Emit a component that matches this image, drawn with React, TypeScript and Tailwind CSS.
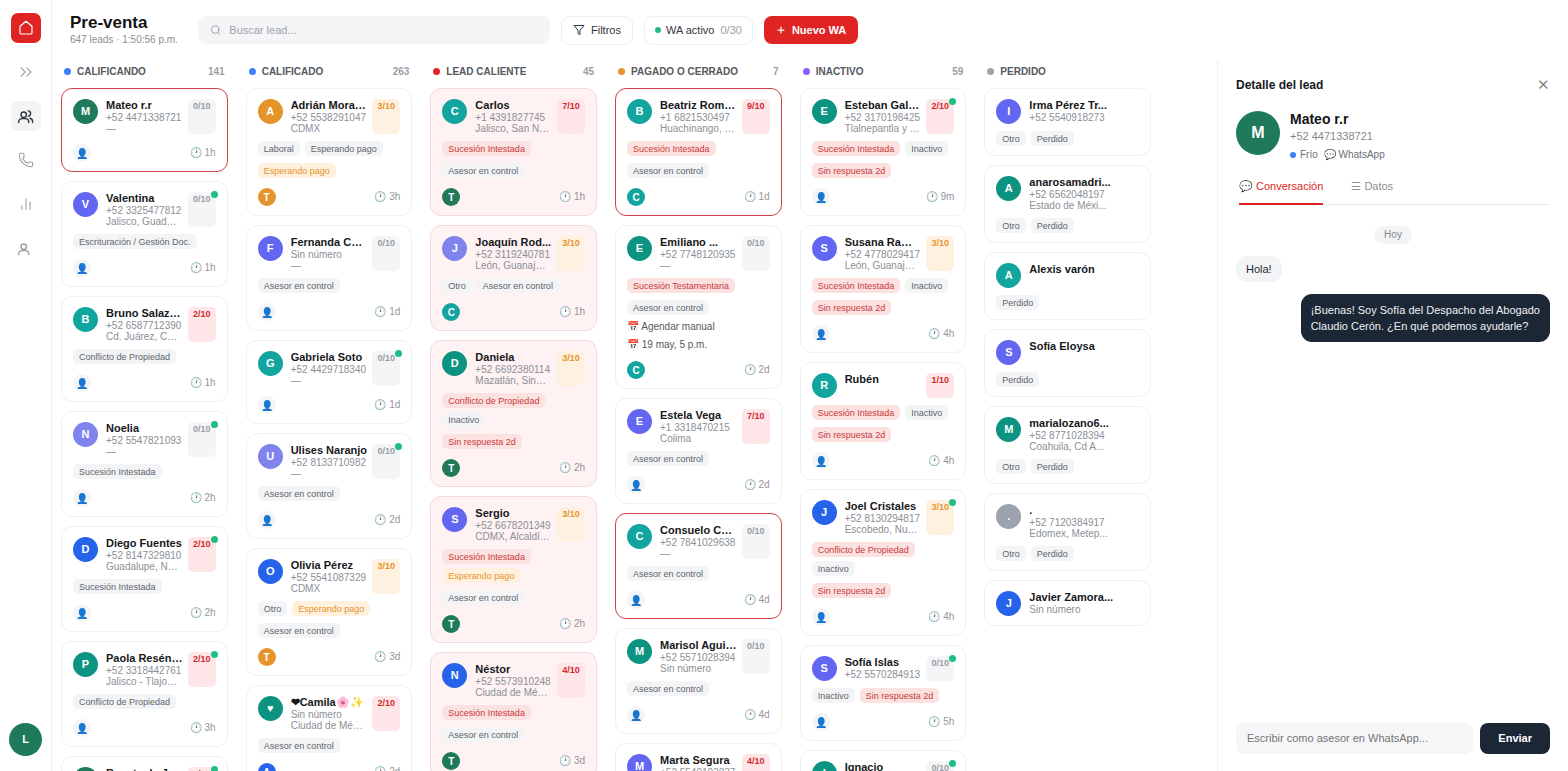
import type { ReactNode } from 'react';
import { ChartNoAxesColumn, ChevronsRight, Phone, Plus, Search } from 'lucide-react';

type Tone = 'gray' | 'red' | 'amber';

type Lead = {
  name: string;
  initial: string;
  color: string;
  lines?: string[];
  score?: number;
  tone?: Tone;
  online?: boolean;
  outlined?: boolean;
  tags?: [string, Tone][];
  status?: [string, Tone];
  agenda?: string[];
  owner?: [string, string];
  age?: string;
};

const GREEN = 'bg-[#1f7a5a]';
const TEAL = 'bg-[#12a5a0]';
const PINE = 'bg-[#0d9382]';
const INDIGO = 'bg-[#6366f1]';
const LILAC = 'bg-[#7f83ec]';
const BLUE = 'bg-[#2563eb]';
const ORANGE = 'bg-[#e5942b]';
const SLATE = 'bg-[#9ca3af]';

const CONTROL: [string, Tone] = ['Asesor en control', 'gray'];
const NO_REPLY: [string, Tone] = ['Sin respuesta 2d', 'red'];

const COLUMNS: { title: string; count?: number; dot: string; hot?: boolean; leads: Lead[] }[] = [
  {
    title: 'CALIFICANDO',
    count: 141,
    dot: 'bg-[#3b82f6]',
    leads: [
      { name: 'Mateo r.r', initial: 'M', color: GREEN, lines: ['+52 4471338721', '—'], score: 0, outlined: true, age: '1h' },
      { name: 'Valentina', initial: 'V', color: INDIGO, lines: ['+52 3325477812', 'Jalisco, Guad…'], score: 0, online: true, tags: [['Escrituración / Gestión Doc.', 'gray']], age: '1h' },
      { name: 'Bruno Salaz…', initial: 'B', color: TEAL, lines: ['+52 6587712390', 'Cd. Juárez, C…'], score: 2, tone: 'red', tags: [['Conflicto de Propiedad', 'gray']], age: '1h' },
      { name: 'Noelia', initial: 'N', color: LILAC, lines: ['+52 5547821093', '—'], score: 0, online: true, tags: [['Sucesión Intestada', 'gray']], age: '2h' },
      { name: 'Diego Fuentes', initial: 'D', color: BLUE, lines: ['+52 8147329810', 'Guadalupe, N…'], score: 2, tone: 'red', online: true, tags: [['Sucesión Intestada', 'gray']], age: '2h' },
      { name: 'Paola Resén…', initial: 'P', color: PINE, lines: ['+52 3318442761', 'Jalisco - Tlajo…'], score: 2, tone: 'red', online: true, tags: [['Conflicto de Propiedad', 'gray']], age: '3h' },
      { name: 'Renata de J…', initial: 'R', color: GREEN, lines: ['+52 5512093847', 'CDMX'], score: 2, tone: 'red', online: true, age: '3h' },
    ],
  },
  {
    title: 'CALIFICADO',
    count: 263,
    dot: 'bg-[#3b82f6]',
    leads: [
      { name: 'Adrián Mora…', initial: 'A', color: ORANGE, lines: ['+52 5538291047', 'CDMX'], score: 3, tone: 'amber', tags: [['Laboral', 'gray'], ['Esperando pago', 'gray']], status: ['Esperando pago', 'amber'], owner: ['T', ORANGE], age: '3h' },
      { name: 'Fernanda C…', initial: 'F', color: INDIGO, lines: ['Sin número', '—'], score: 0, status: CONTROL, age: '1d' },
      { name: 'Gabriela Soto', initial: 'G', color: TEAL, lines: ['+52 4429718340', '—'], score: 0, online: true, age: '1d' },
      { name: 'Ulises Naranjo', initial: 'U', color: LILAC, lines: ['+52 8133710982', '—'], score: 0, online: true, status: CONTROL, age: '2d' },
      { name: 'Olivia Pérez', initial: 'O', color: BLUE, lines: ['+52 5541087329', 'CDMX'], score: 3, tone: 'amber', tags: [['Otro', 'gray'], ['Esperando pago', 'amber']], status: CONTROL, owner: ['T', ORANGE], age: '3d' },
      { name: '❤Camila🌸✨', initial: '♥', color: PINE, lines: ['Sin número', 'Ciudad de Mé…'], score: 2, tone: 'red', status: CONTROL, owner: ['A', BLUE], age: '2d' },
    ],
  },
  {
    title: 'LEAD CALIENTE',
    count: 45,
    dot: 'bg-[#e02424]',
    hot: true,
    leads: [
      { name: 'Carlos', initial: 'C', color: TEAL, lines: ['+1 4391827745', 'Jalisco, San N…'], score: 7, tone: 'red', tags: [['Sucesión Intestada', 'red']], status: CONTROL, owner: ['T', GREEN], age: '1h' },
      { name: 'Joaquín Rod...', initial: 'J', color: LILAC, lines: ['+52 3119240781', 'León, Guanaj…'], score: 3, tone: 'amber', tags: [['Otro', 'gray'], CONTROL], owner: ['C', TEAL], age: '1h' },
      { name: 'Daniela', initial: 'D', color: PINE, lines: ['+52 6692380114', 'Mazatlán, Sin…'], score: 3, tone: 'amber', tags: [['Conflicto de Propiedad', 'red'], ['Inactivo', 'gray']], status: NO_REPLY, owner: ['T', GREEN], age: '2h' },
      { name: 'Sergio', initial: 'S', color: INDIGO, lines: ['+52 6678201349', 'CDMX, Alcaldí…'], score: 3, tone: 'amber', tags: [['Sucesión Intestada', 'red'], ['Esperando pago', 'amber']], status: CONTROL, owner: ['T', GREEN], age: '2h' },
      { name: 'Néstor', initial: 'N', color: BLUE, lines: ['+52 5573910248', 'Ciudad de Mé…'], score: 4, tone: 'red', tags: [['Sucesión Intestada', 'red']], status: CONTROL, owner: ['T', GREEN], age: '3d' },
    ],
  },
  {
    title: 'PAGADO O CERRADO',
    count: 7,
    dot: 'bg-[#e5942b]',
    leads: [
      { name: 'Beatriz Rom…', initial: 'B', color: TEAL, lines: ['+1 6821530497', 'Huachinango, …'], score: 9, tone: 'red', outlined: true, tags: [['Sucesión Intestada', 'red']], status: CONTROL, owner: ['C', TEAL], age: '1d' },
      { name: 'Emiliano ...', initial: 'E', color: PINE, lines: ['+52 7748120935', '—'], score: 0, tags: [['Sucesión Testamentaria', 'red']], status: CONTROL, agenda: ['Agendar manual', '19 may, 5 p.m.'], owner: ['C', TEAL], age: '2d' },
      { name: 'Estela Vega', initial: 'E', color: INDIGO, lines: ['+1 3318470215', 'Colima'], score: 7, tone: 'red', status: CONTROL, age: '2d' },
      { name: 'Consuelo C…', initial: 'C', color: TEAL, lines: ['+52 7841029638', '—'], score: 0, outlined: true, status: CONTROL, age: '4d' },
      { name: 'Marisol Agui…', initial: 'M', color: PINE, lines: ['+52 5571028394', 'Sin número'], score: 0, status: CONTROL, age: '4d' },
      { name: 'Marta Segura', initial: 'M', color: INDIGO, lines: ['+52 5540192837', '—'], score: 4, tone: 'red', status: CONTROL, age: '5d' },
    ],
  },
  {
    title: 'INACTIVO',
    count: 59,
    dot: 'bg-[#8b5cf6]',
    leads: [
      { name: 'Esteban Gal…', initial: 'E', color: PINE, lines: ['+52 3170198425', 'Tlalnepantla y …'], score: 2, tone: 'red', online: true, tags: [['Sucesión Intestada', 'red'], ['Inactivo', 'gray']], status: NO_REPLY, age: '9m' },
      { name: 'Susana Ra…', initial: 'S', color: INDIGO, lines: ['+52 4778029417', 'León, Guanaj…'], score: 3, tone: 'amber', tags: [['Sucesión Intestada', 'red'], ['Inactivo', 'gray']], status: NO_REPLY, age: '4h' },
      { name: 'Rubén', initial: 'R', color: TEAL, score: 1, tone: 'red', tags: [['Sucesión Intestada', 'red'], ['Inactivo', 'gray']], status: NO_REPLY, age: '4h' },
      { name: 'Joel Cristales', initial: 'J', color: BLUE, lines: ['+52 8130294817', 'Escobedo, Nu…'], score: 3, tone: 'amber', online: true, tags: [['Conflicto de Propiedad', 'red'], ['Inactivo', 'gray']], status: NO_REPLY, age: '4h' },
      { name: 'Sofía Islas', initial: 'S', color: INDIGO, lines: ['+52 5570284913'], score: 0, online: true, tags: [['Inactivo', 'gray'], NO_REPLY], age: '5h' },
      { name: 'Ignacio', initial: 'I', color: PINE, lines: ['+52 5598120374'], score: 0, online: true, age: '5h' },
    ],
  },
  {
    title: 'PERDIDO',
    dot: 'bg-[#9ca3af]',
    leads: [
      { name: 'Irma Pérez Tr...', initial: 'I', color: INDIGO, lines: ['+52 5540918273'], tags: [['Otro', 'gray'], ['Perdido', 'gray']] },
      { name: 'anarosamadri...', initial: 'A', color: PINE, lines: ['+52 6562048197', 'Estado de Méxi...'], tags: [['Otro', 'gray'], ['Perdido', 'gray']] },
      { name: 'Alexis varón', initial: 'A', color: TEAL, tags: [['Perdido', 'gray']] },
      { name: 'Sofía Eloysa', initial: 'S', color: INDIGO, tags: [['Perdido', 'gray']] },
      { name: 'marialozano6...', initial: 'M', color: PINE, lines: ['+52 8771028394', 'Coahuila, Cd A...'], tags: [['Otro', 'gray'], ['Perdido', 'gray']] },
      { name: '.', initial: '.', color: SLATE, lines: ['+52 7120384917', 'Edomex, Metep...'], tags: [['Otro', 'gray'], ['Perdido', 'gray']] },
      { name: 'Javier Zamora...', initial: 'J', color: BLUE, lines: ['Sin número'] },
    ],
  },
];

const TAG_TONE: Record<Tone, string> = {
  gray: 'bg-[#f3f4f6] text-[#60646b]',
  red: 'bg-[#fce1e1] text-[#c73a3a]',
  amber: 'bg-[#fff1dd] text-[#e5942b]',
};

const SCORE_TONE: Record<Tone, string> = {
  gray: 'bg-[#f3f5f7] text-[#9a9ea5]',
  red: 'bg-[#fee5e7] text-[#d32a2f]',
  amber: 'bg-[#fff1df] text-[#e5942b]',
};

function Tag({ label, tone }: { label: string; tone: Tone }) {
  return <span className={`h-[15px] rounded-[5px] px-1.5 text-[9px] leading-[16px] whitespace-nowrap ${TAG_TONE[tone]}`}>{label}</span>;
}

function LeadCard({ lead, hot }: { lead: Lead; hot?: boolean }) {
  const frame = lead.outlined
    ? 'border-[#cf4047] bg-white'
    : hot
      ? 'border-[#f6dadb] bg-[#fef2f2]'
      : 'border-[#eff0f2] bg-white';

  return (
    <article className={`shrink-0 rounded-[11px] border px-[11px] pt-[10px] pb-[9px] ${frame}`}>
      <div className="flex gap-2">
        <div className={`flex size-[25px] shrink-0 items-center justify-center rounded-full text-[11px] font-bold text-white ${lead.color}`}>
          {lead.initial}
        </div>
        <div className="min-w-0 flex-1 whitespace-nowrap">
          <h3 className="text-[11px] leading-[13px] font-bold text-[#16181b]">{lead.name}</h3>
          {lead.lines?.map((line) => (
            <p key={line} className="text-[10px] leading-[11px] text-[#8b8f96]">{line}</p>
          ))}
        </div>
        {lead.score !== undefined && (
          <div className={`relative w-7 shrink-0 rounded-[5px] text-center text-[9px] leading-[14px] font-bold ${SCORE_TONE[lead.tone ?? 'gray']}`}>
            {lead.score}/10
            {lead.online && <span className="absolute -top-px -right-0.5 size-[7px] rounded-full bg-[#1fbf83]" />}
          </div>
        )}
      </div>
      {lead.tags && (
        <div className="mt-[7px] flex flex-wrap gap-x-[5px] gap-y-1">
          {lead.tags.map(([label, tone]) => (
            <Tag key={label} label={label} tone={tone} />
          ))}
        </div>
      )}
      {lead.status && (
        <div className="mt-[7px] flex">
          <Tag label={lead.status[0]} tone={lead.status[1]} />
        </div>
      )}
      {lead.agenda && (
        <div className="-mb-[3px] pt-[3px]">
          {lead.agenda.map((item) => (
            <p key={item} className="text-[10px] leading-[18px] text-[#55585e]">📅 {item}</p>
          ))}
        </div>
      )}
      {lead.age && (
        <div className="mt-[10px] flex h-[18px] items-center justify-between">
          {lead.owner ? (
            <span className={`flex size-[18px] items-center justify-center rounded-full text-[10px] font-bold text-white ${lead.owner[1]}`}>{lead.owner[0]}</span>
          ) : (
            <span className="flex size-[18px] items-center justify-center rounded-full bg-[#f3f4f6] text-[10px]">👤</span>
          )}
          <span className="text-[10px] leading-[12px] text-[#92969c]">🕐 {lead.age}</span>
        </div>
      )}
    </article>
  );
}

function NavButton({ label, active, children }: { label: string; active?: boolean; children: ReactNode }) {
  return (
    <button
      type="button"
      aria-label={label}
      className={`flex size-[30px] items-center justify-center rounded-[7px] ${active ? 'bg-[#f3f4f6] text-[#33363b]' : 'text-[#9a9ea5]'}`}
    >
      {children}
    </button>
  );
}

function PersonIcon({ pair }: { pair?: boolean }) {
  return (
    <svg viewBox="0 0 24 24" className="size-[17px]" fill="none" stroke="currentColor" strokeWidth="2" strokeLinecap="round">
      <circle cx="9.500" cy="9.500" r="3.800" />
      <path d="M2.500 20.500v-1c0-2.800 2.300-4.500 5-4.500h4c2.700 0 5 1.700 5 4.500v1" />
      {pair && <path d="M16 4a3.800 3.800 0 0 1 0 7.500M18.500 14.500c2.200.6 3.500 2.300 3.500 4.500v1.500" />}
    </svg>
  );
}

function Sidebar() {
  return (
    <nav className="flex w-[52px] shrink-0 flex-col items-center gap-[14px] border-r border-[#eeeff1] pt-[13px] pb-[15px]">
      <a href="#inicio" aria-label="Inicio" className="flex size-[30px] items-center justify-center rounded-[7px] bg-[#e02424] text-white">
        <svg viewBox="0 0 24 24" className="size-4" fill="none" stroke="currentColor" strokeWidth="1.800" strokeLinejoin="round">
          <path d="M3 9.500 12 2l9 7.500V19a2 2 0 0 1-2 2H5a2 2 0 0 1-2-2z" />
        </svg>
      </a>
      <NavButton label="Expandir"><ChevronsRight size={20} strokeWidth={1.3} /></NavButton>
      <NavButton label="Leads" active><PersonIcon pair /></NavButton>
      <NavButton label="Llamadas"><Phone size={16} strokeWidth={1.6} /></NavButton>
      <NavButton label="Reportes"><ChartNoAxesColumn size={14} strokeWidth={1.8} /></NavButton>
      <NavButton label="Perfil"><PersonIcon /></NavButton>
      <div className={`mt-auto flex size-[33px] items-center justify-center rounded-full text-[11px] font-bold text-white ${GREEN}`}>L</div>
    </nav>
  );
}

function TopBar() {
  return (
    <header className="flex h-[60px] shrink-0 items-center pl-[18px]">
      <div className="w-[128px]">
        <h1 className="text-[17px] leading-[20px] font-bold text-[#121416]">Pre-venta</h1>
        <p className="text-[10px] leading-[14px] whitespace-nowrap text-[#8b8f96]">647 leads · 1:50:56 p.m.</p>
      </div>
      <div className="flex items-center gap-[11px] text-[11px]">
        <div className="flex h-[28px] w-[352px] items-center gap-2 rounded-lg bg-[#f3f5f7] px-3 text-[#9a9ea5]">
          <Search size={12} strokeWidth={2} />
          <input type="search" aria-label="Buscar lead" placeholder="Buscar lead..." className="w-full bg-transparent outline-none placeholder:text-[#9fa3a9]" />
        </div>
        <button type="button" className="flex h-[29px] items-center gap-1.5 rounded-lg border border-[#eceef0] px-[11px] text-[#33363b]">
          <svg viewBox="0 0 24 24" className="size-3" fill="none" stroke="currentColor" strokeWidth="2" strokeLinejoin="round">
            <path d="M22 3H2l8 9.460V19l4 2v-8.540z" />
          </svg>
          Filtros
        </button>
        <button type="button" className="flex h-[29px] items-center rounded-lg border border-[#eceef0] px-[10px] text-[#33363b]">
          <span className="mr-[5px] size-1.5 rounded-full bg-[#26b884]" />
          WA activo
          <span className="ml-1.5 text-[#9a9ea5]">0/30</span>
        </button>
        <button type="button" className="flex h-[28px] items-center gap-1.5 rounded-lg bg-[#e02424] px-3 font-bold text-white">
          <Plus size={10} strokeWidth={3} />
          Nuevo WA
        </button>
      </div>
    </header>
  );
}

function Board() {
  return (
    <main className="min-w-0 flex-1 overflow-hidden pl-[9px]">
      <div className="grid w-[1090px] grid-cols-6 gap-[18px]">
        {COLUMNS.map((column) => (
          <section key={column.title} className="min-w-0">
            <h2 className="flex h-[22px] items-center px-[3px] text-[10px] font-bold text-[#55585e]">
              <span className={`mr-1.5 size-[7px] rounded-full ${column.dot}`} />
              {column.title}
              <span className="ml-auto text-[#9a9ea5]">{column.count}</span>
            </h2>
            <div className="mt-1.5 flex flex-col gap-[9px]">
              {column.leads.map((lead) => (
                <LeadCard key={lead.name} lead={lead} hot={column.hot} />
              ))}
            </div>
          </section>
        ))}
      </div>
    </main>
  );
}

function LeadDetail() {
  return (
    <aside className="flex w-[351px] shrink-0 flex-col border-l border-[#eeeff1] px-[18px] pt-[16px] pb-[17px]">
      <div className="flex h-[18px] items-center justify-between">
        <h2 className="text-[12px] font-bold text-[#16181b]">Detalle del lead</h2>
        <button type="button" aria-label="Cerrar" className="text-[15px] leading-[18px] text-[#85898f]">✕</button>
      </div>

      <div className="mt-[17px] flex items-start gap-[10px]">
        <div className={`flex size-11 items-center justify-center rounded-full text-[16px] font-bold text-white ${GREEN}`}>M</div>
        <div>
          <p className="text-[14px] leading-[16px] font-bold text-[#121416]">Mateo r.r</p>
          <p className="text-[11px] leading-[18px] text-[#85898f]">+52 4471338721</p>
          <p className="mt-0.5 flex items-center text-[10px] leading-[15px] text-[#6b6f76]">
            <span className="mr-1 size-1.5 rounded-full bg-[#3b82f6]" />
            Frío
            <span className="ml-1.5">💬 WhatsApp</span>
          </p>
        </div>
      </div>

      <div className="mt-[15px] flex gap-7 border-b border-[#e9eaec] px-[3px] text-[11px]">
        <button type="button" className="-mb-px h-[28px] border-b-2 border-[#e02424] pb-2 text-[#e02424]">💬 Conversación</button>
        <button type="button" className="-mb-px h-[28px] border-b-2 border-transparent pb-2 text-[#8b8f96]">☰ Datos</button>
      </div>

      <div className="flex flex-1 flex-col gap-[12px] pt-[21px] text-[11px]">
        <span className="self-center rounded-full bg-[#f3f4f6] px-[10px] text-[10px] leading-[18px] text-[#85898f]">Hoy</span>
        <p className="self-start rounded-[11px] bg-[#f3f4f6] px-[10px] py-[5px] leading-4 text-[#24272b]">Hola!</p>
        <p className="self-end rounded-[11px] bg-[#1c2735] px-[10px] py-2 leading-4 whitespace-nowrap text-[#eef1f4]">
          ¡Buenas! Soy Sofía del Despacho del Abogado
          <br />
          Claudio Cerón. ¿En qué podemos ayudarle?
        </p>
      </div>

      <form className="flex h-[31px] gap-[7px] text-[11px]">
        <input
          type="text"
          aria-label="Mensaje"
          placeholder="Escribir como asesor en WhatsApp..."
          className="min-w-0 flex-1 rounded-lg bg-[#f5f6f8] px-[11px] outline-none placeholder:text-[#757575]"
        />
        <button type="button" className="rounded-lg bg-[#1c2735] px-[18px] font-bold text-white">Enviar</button>
      </form>
    </aside>
  );
}

export default function App() {
  return (
    <div className="flex h-screen overflow-hidden bg-white font-['Liberation_Sans',Arial,sans-serif]">
      <Sidebar />
      <div className="flex min-w-0 flex-1 flex-col">
        <TopBar />
        <div className="flex min-h-0 flex-1">
          <Board />
          <LeadDetail />
        </div>
      </div>
    </div>
  );
}
